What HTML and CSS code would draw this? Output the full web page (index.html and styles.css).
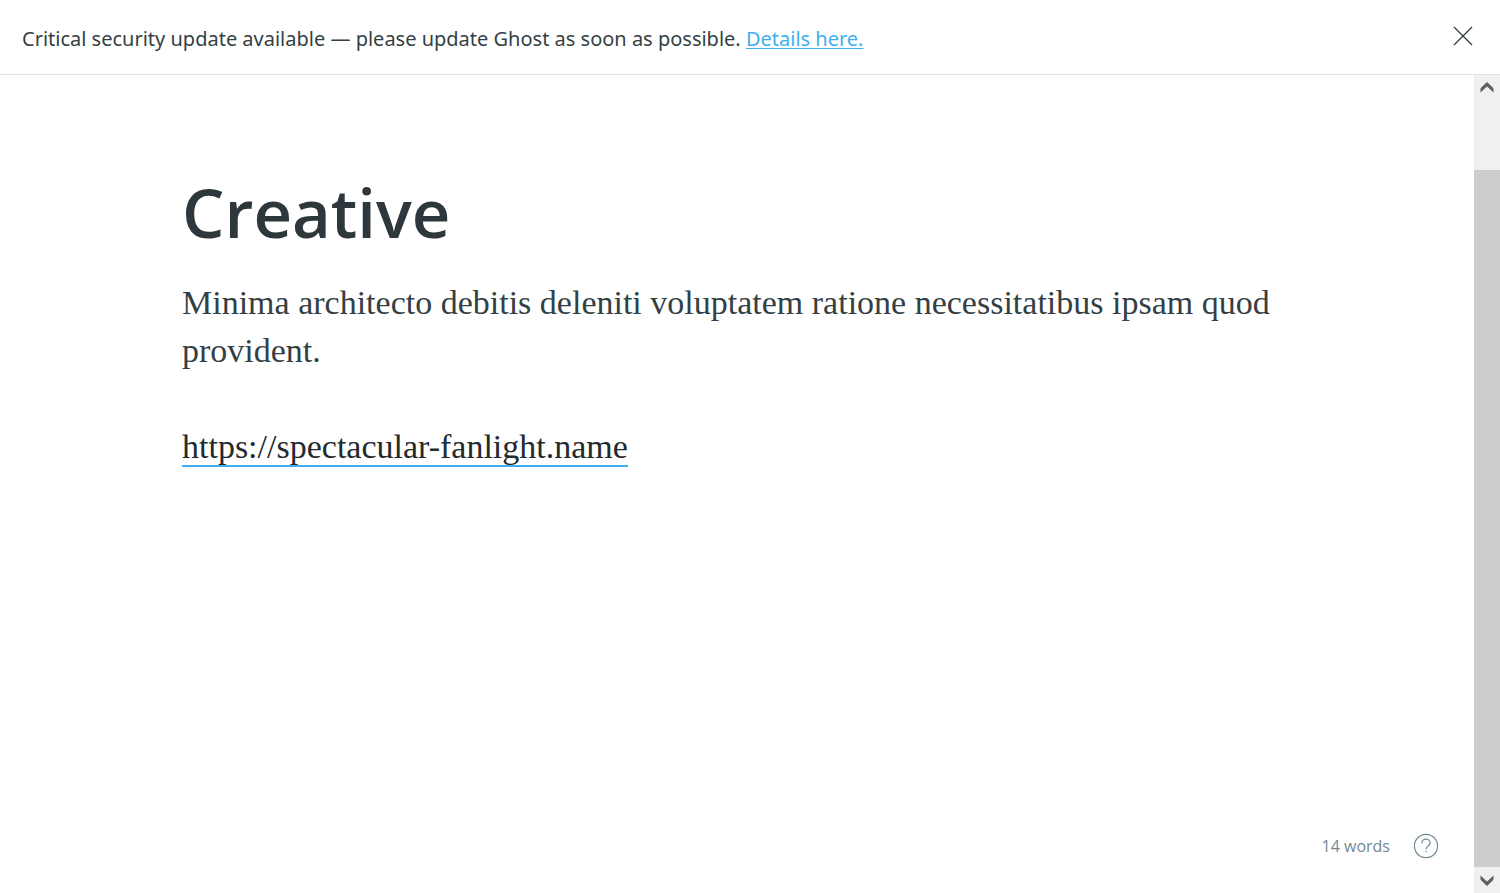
FILE: index.html
```html
<!DOCTYPE html>
<html lang="en">
<head>
  <meta charset="utf-8">
  <meta name="viewport" content="width=device-width, initial-scale=1">
  <title>Creative</title>
  <link rel="stylesheet" href="styles.css">
</head>
<body class="app">
  <header class="alert">
    <p class="alert-text">Critical security update available — please update Ghost as soon as possible. <a class="alert-link" href="#details">Details here.</a></p>
    <button class="alert-close" type="button" aria-label="Close">
      <svg class="close-icon" viewBox="0 0 20 20" aria-hidden="true"><path d="M1.8 1.8l16.4 16.4M18.2 1.8L1.8 18.2"/></svg>
    </button>
  </header>
  <div class="workspace">
    <main class="editor">
      <article class="post">
        <h1 class="post-title">Creative</h1>
        <p class="post-text">Minima architecto debitis deleniti voluptatem ratione necessitatibus ipsam quod provident.</p>
        <p class="post-text"><a class="post-link" href="#link">https://spectacular-fanlight.name</a></p>
      </article>
      <footer class="status">
        <span class="word-count">14 words</span>
        <button class="help" type="button" aria-label="Help">
          <svg class="help-icon" viewBox="0 0 26 26" aria-hidden="true"><circle cx="13" cy="13" r="11.6"/><path d="M8.9 10.4V9.9A4.1 3.7 0 0 1 17.1 9.9C17.1 12.8 13.1 12.6 13.1 16.2"/><path d="M13.1 17.8v1.5"/></svg>
        </button>
      </footer>
    </main>
    <div class="scrollbar">
      <button class="scroll-arrow" type="button" aria-label="Scroll up">
        <svg class="arrow-icon" viewBox="0 0 26 26" aria-hidden="true"><path d="M13 7l6.5 6.2v4.2L13 11.6l-6.5 5.8v-4.2z"/></svg>
      </button>
      <div class="scroll-track"><div class="scroll-thumb"></div></div>
      <button class="scroll-arrow" type="button" aria-label="Scroll down">
        <svg class="arrow-icon" viewBox="0 0 26 26" aria-hidden="true"><path d="M13 19l6.5-6.2V8.6L13 14.4 6.5 8.6v4.2z"/></svg>
      </button>
    </div>
  </div>
</body>
</html>
```
FILE: styles.css
```css
* {
  box-sizing: border-box;
}

.app {
  display: flex;
  flex-direction: column;
  height: 100vh;
  margin: 0;
  overflow: hidden;
  background: #fff;
  color: #343f44;
  font-family: "Segoe UI", "Open Sans", "Noto Sans", sans-serif;
}

button {
  display: flex;
  padding: 0;
  border: 0;
  background: none;
  cursor: pointer;
}

.alert {
  display: flex;
  align-items: center;
  justify-content: space-between;
  gap: 24px;
  padding: 21px 26px 17px 22px;
  border-bottom: 1px solid #dfe1e3;
}

.alert-text {
  margin: 0;
  font-family: "Segoe UI", "Noto Sans", sans-serif;
  font-size: 20px;
  line-height: 36px;
}

.alert-link {
  color: #3eb0ef;
  text-decoration-thickness: 1px;
  text-underline-offset: 2px;
}

.alert-close {
  padding-bottom: 6px;
}

.close-icon {
  width: 22px;
  height: 22px;
  fill: none;
  stroke: #343f44;
  stroke-width: 1.2;
}

.workspace {
  display: flex;
  flex: 1;
  min-height: 0;
}

.editor {
  display: flex;
  flex: 1;
  flex-direction: column;
  justify-content: space-between;
  min-width: 0;
}

.post {
  padding: 94px 182px 0;
}

.post-title {
  margin: 0 0 24px;
  color: #2d373c;
  font-size: 67px;
  font-weight: 600;
  line-height: 86px;
}

.post-text {
  margin: 0 0 48px;
  font-family: Georgia, "Liberation Serif", serif;
  font-size: 34px;
  line-height: 48px;
}

.post-link {
  border-bottom: 2px solid #3eb0ef;
  color: #222a2e;
  text-decoration: none;
}

.status {
  display: flex;
  align-items: center;
  justify-content: flex-end;
  gap: 23px;
  padding: 0 35px 34px 0;
  color: #738a94;
  font-size: 16px;
  line-height: 26px;
}

.help-icon {
  width: 26px;
  height: 26px;
  fill: none;
  stroke: #738a94;
  stroke-width: 1.2;
}

.scrollbar {
  display: flex;
  flex-direction: column;
  width: 26px;
  background: #f0f0f0;
}

.arrow-icon {
  width: 26px;
  height: 26px;
  fill: #606060;
}

.scroll-track {
  display: flex;
  flex: 1;
  align-items: flex-end;
}

.scroll-thumb {
  width: 100%;
  height: 91%;
  background: #cdcdcd;
}
```
